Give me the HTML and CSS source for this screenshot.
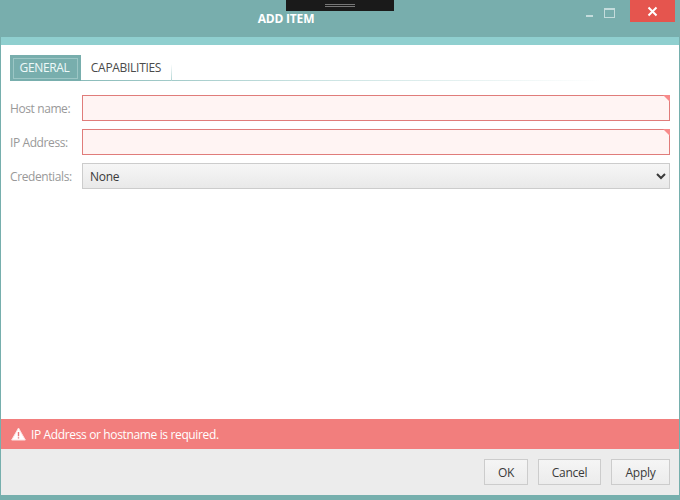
FILE: index.html
```html
<!DOCTYPE html>
<html lang="en">
<head>
<meta charset="utf-8">
<title>Add Item</title>
<link rel="stylesheet" href="styles.css">
</head>
<body>
<div class="window">
  <header class="titlebar">
    <div class="grip"><span class="grip-lines"></span></div>
    <h1 class="title">ADD ITEM</h1>
    <div class="controls">
      <span class="ctl-min"></span>
      <span class="ctl-max"></span>
      <button class="ctl-close" type="button" aria-label="Close">
        <svg width="11" height="11" viewBox="0 0 11 11"><path d="M1.5 1.5l8 8M9.5 1.5l-8 8" stroke="#fff" stroke-width="2" fill="none"/></svg>
      </button>
    </div>
  </header>
  <div class="strip"></div>
  <main class="content">
    <nav class="tabs">
      <div class="tab tab-active"><span class="tab-inner">GENERAL</span></div>
      <div class="tab tab-plain">CAPABILITIES</div>
    </nav>
    <form class="form">
      <label class="label" for="host">Host name:</label>
      <div class="invalid"><input id="host" class="input" type="text"></div>
      <label class="label" for="ip">IP Address:</label>
      <div class="invalid"><input id="ip" class="input" type="text"></div>
      <label class="label" for="cred">Credentials:</label>
      <select id="cred" class="select"><option>None</option></select>
    </form>
  </main>
  <div class="alert">
    <svg class="alert-icon" width="15" height="14" viewBox="0 0 15 14">
      <path d="M7.5 1L14.3 13H.7z" fill="#fff" stroke="#fde3e3" stroke-width="1" stroke-linejoin="round"/>
      <path d="M7.5 5v4.2M7.5 10.2v1.4" stroke="#e8787a" stroke-width="1.4" fill="none"/>
    </svg>
    <span>IP Address or hostname is required.</span>
  </div>
  <footer class="footer">
    <button class="btn btn-ok" type="button">OK</button>
    <button class="btn btn-cancel" type="button">Cancel</button>
    <button class="btn btn-apply" type="button">Apply</button>
  </footer>
</div>
</body>
</html>
```
FILE: styles.css
```css
* { box-sizing: border-box; }
html, body { margin: 0; padding: 0; }
body {
  width: 680px;
  height: 500px;
  overflow: hidden;
  font-family: "Open Sans", "Noto Sans", sans-serif;
  font-size: 12px;
  background: #fff;
}
.window {
  position: relative;
  width: 680px;
  height: 500px;
  display: flex;
  flex-direction: column;
  border: solid #76afad;
  border-width: 0 1px 5px 1px;
}
.titlebar {
  height: 37px;
  margin: 0 -1px;
  background: #78aead;
  display: flex;
  flex: none;
}
.grip {
  position: absolute;
  left: 285px;
  top: 0;
  width: 108px;
  height: 11px;
  background: #1a1a1a;
  display: flex;
  justify-content: center;
  padding-top: 4px;
}
.grip-lines {
  width: 30px;
  height: 3px;
  border-top: 1px solid #777;
  border-bottom: 1px solid #777;
}
.title {
  flex: 1;
  margin: 0;
  padding-top: 10px;
  text-align: center;
  color: #fff;
  font-size: 12px;
  line-height: 17px;
  font-weight: 700;
  letter-spacing: -0.2px;
}
.controls {
  width: 108px;
  flex: none;
  display: flex;
  align-items: flex-start;
  padding-left: 14px;
}
.ctl-min {
  width: 7px;
  height: 2px;
  margin-top: 15px;
  background: #c4dcdc;
}
.ctl-max {
  width: 11px;
  height: 10px;
  margin: 8px 0 0 11px;
  border: 1px solid #c4dcdc;
  border-top-width: 2px;
}
.ctl-close {
  width: 45px;
  height: 22px;
  margin-left: 15px;
  padding: 0;
  border: 0;
  background: #e5554e;
  display: flex;
  align-items: center;
  justify-content: center;
}
.strip {
  height: 8px;
  flex: none;
  background: #8fcfcf;
}
.content {
  flex: 1;
  padding: 10px 9px 0;
  background: #fff;
}
.tabs {
  display: flex;
  height: 26px;
  background: linear-gradient(to right, #76afad, #c8e2e1 45%, #ffffff 90%) left bottom / 100% 1px no-repeat;
}
.tab { height: 26px; color: #4a4a4a; }
.tab-active {
  width: 71px;
  padding: 3px 3px 2px;
  background: #78aead;
}
.tab-inner {
  display: block;
  height: 21px;
  line-height: 18px;
  border: 1px solid #9cc6c5;
  color: #eef9f9;
  text-align: center;
  letter-spacing: -0.35px;
  padding-right: 2px;
}
.tab-plain {
  width: 91px;
  line-height: 25px;
  text-align: center;
  letter-spacing: -0.3px;
  border-right: 1px solid transparent;
  border-image: linear-gradient(to bottom, #ffffff 35%, #a9d0cf) 1;
}
.form {
  display: grid;
  grid-template-columns: 72px 1fr;
  grid-auto-rows: 26px;
  row-gap: 8px;
  margin-top: 14px;
  align-items: center;
}
.label {
  color: #999;
  letter-spacing: -0.4px;
}
.invalid {
  position: relative;
  height: 26px;
}
.invalid::after {
  content: "";
  position: absolute;
  top: 0;
  right: 0;
  border-style: solid;
  border-width: 0 7px 7px 0;
  border-color: transparent #f88a8a transparent transparent;
}
.input {
  display: block;
  width: 100%;
  height: 26px;
  padding: 0 8px;
  border: 1px solid #e07c7a;
  background: #fff4f3;
  outline: 0;
}
.select {
  width: 100%;
  height: 26px;
  padding: 0 3px;
  border: 1px solid #ccc;
  background: linear-gradient(to bottom, #f6f6f6, #e9e9e9);
  color: #3a3a3a;
  font: inherit;
  letter-spacing: -0.3px;
}
.alert {
  height: 30px;
  flex: none;
  display: flex;
  align-items: center;
  gap: 5px;
  padding-left: 10px;
  background: #f27e7d;
  color: #fff;
  letter-spacing: -0.36px;
}
.alert-icon { flex: none; }
.footer {
  height: 46px;
  flex: none;
  display: flex;
  justify-content: flex-end;
  gap: 10px;
  padding: 10px 9px 0 0;
  background: #ececec;
}
.btn {
  height: 26px;
  padding: 0;
  border: 1px solid #ccc;
  background: linear-gradient(to bottom, #f5f5f5, #ececec);
  color: #3a3a3a;
  font: inherit;
  letter-spacing: -0.25px;
}
.btn-ok { width: 44px; }
.btn-cancel { width: 63px; }
.btn-apply { width: 59px; }
```
